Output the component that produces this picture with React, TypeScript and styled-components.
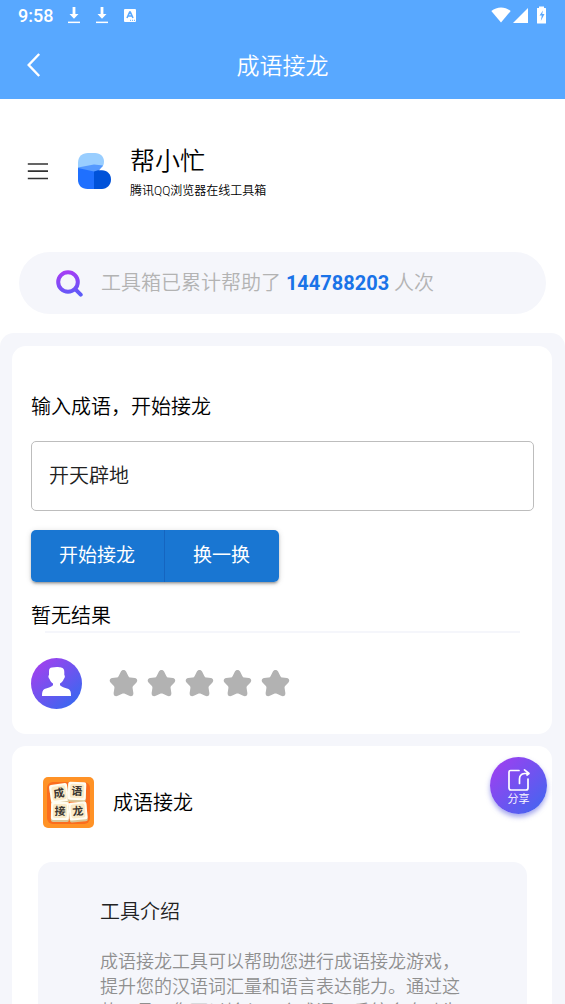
import React from "react";
import styled, { createGlobalStyle } from "styled-components";

const GlobalStyle = createGlobalStyle`
  * { box-sizing: border-box; }
  body { margin: 0; background: #fff; }
  body, button, input {
    font-family: Roboto, "Noto Sans CJK SC", sans-serif;
  }
  h1, h2, h3, p { margin: 0; font-weight: 350; }
`;

const Screen = styled.div`
  position: relative;
  display: flex;
  flex-direction: column;
  height: 100vh;
  overflow: hidden;
  color: #000;
`;

const TopBar = styled.header`
  flex: none;
  background: #58a8ff;
  color: #fff;
`;

const StatusBar = styled.div`
  display: flex;
  align-items: center;
  justify-content: space-between;
  height: 32px;
  padding: 0 18px;
`;

const StatusGroup = styled.div<{ $gap: number }>`
  display: flex;
  align-items: center;
  gap: ${(p) => p.$gap}px;
`;

const Clock = styled.time`
  font-size: 18px;
  font-weight: 500;
  line-height: 32px;
`;

const TitleBar = styled.div`
  display: grid;
  grid-template-columns: 68px 1fr 68px;
  align-items: center;
  height: 67px;
`;

const IconButton = styled.button`
  display: flex;
  align-items: center;
  justify-content: center;
  padding: 0;
  border: 0;
  background: none;
  color: inherit;
  cursor: pointer;
`;

const Title = styled.h1`
  padding-top: 2px;
  font-size: 23px;
  line-height: 32px;
  text-align: center;
`;

const Scroller = styled.main`
  flex: 1;
  min-height: 0;
  overflow-y: auto;
  scrollbar-width: none;
`;

const Brand = styled.section`
  display: flex;
  align-items: center;
  height: 144px;
  padding-left: 27px;
`;

const Logo = styled.svg`
  margin: 0 19px 0 29px;
`;

const BrandText = styled.div`
  padding-top: 6px;
`;

const BrandName = styled.h2`
  font-size: 25px;
  line-height: 34px;
`;

const BrandNote = styled.p`
  font-size: 12px;
  line-height: 24px;
`;

const Counter = styled.section`
  display: flex;
  align-items: center;
  gap: 15px;
  height: 62px;
  margin: 9px 19px 19px;
  padding-left: 36px;
  border-radius: 31px;
  background: #f5f6fb;
  color: #b3b3b3;
  font-size: 20px;
  line-height: 30px;
`;

const Count = styled.strong`
  color: #1a73e8;
  font-weight: 700;
`;

const Panel = styled.div`
  display: flex;
  flex-direction: column;
  gap: 12px;
  padding: 13px 13px 13px 12px;
  border-radius: 14px 14px 0 0;
  background: #f5f6fb;
`;

const Card = styled.section`
  padding: 0 18px 25px 19px;
  border-radius: 14px;
  background: #fff;
`;

const FieldLabel = styled.label`
  display: block;
  padding-top: 46px;
  font-size: 20px;
  font-weight: 350;
  line-height: 30px;
`;

const Field = styled.input`
  display: block;
  width: 100%;
  height: 70px;
  margin: 19px 0;
  padding: 0 17px 3px;
  border: 1px solid #bdbdbd;
  border-radius: 5px;
  background: #fff;
  color: #212121;
  font-size: 20px;
  font-weight: 350;
  outline: 0;
`;

const ButtonGroup = styled.div`
  display: inline-flex;
  vertical-align: top;
  border-radius: 5px;
  box-shadow: 0 3px 2px -2px rgba(0, 0, 0, 0.2), 0 2px 3px rgba(0, 0, 0, 0.2),
    0 1px 6px rgba(0, 0, 0, 0.12);
`;

const Action = styled.button`
  height: 52px;
  padding: 0 29px 0 28px;
  border: 0;
  background: #1976d2;
  color: #fff;
  font-size: 19px;
  line-height: 28px;
  cursor: pointer;
  &:first-child {
    border-right: 1px solid #1565c0;
    border-radius: 5px 0 0 5px;
  }
  &:last-child {
    border-radius: 0 5px 5px 0;
  }
`;

const Result = styled.p`
  margin-top: 19px;
  padding-top: 1px;
  font-size: 20px;
  line-height: 29px;
`;

const Divider = styled.hr`
  height: 2px;
  margin: 0 14px 25px;
  border: 0;
  background: #f5f6fb;
`;

const RatingRow = styled.div`
  display: flex;
  align-items: center;
  gap: 27px;
`;

const Stars = styled.div`
  display: flex;
  gap: 9px;
`;

const ToolHead = styled.div`
  display: flex;
  align-items: center;
  gap: 19px;
  padding: 31px 12px 34px;
`;

const ToolName = styled.h2`
  font-size: 20px;
  line-height: 30px;
`;

const Intro = styled.article`
  margin: 0 7px;
  padding: 35px 62px;
  border-radius: 14px;
  background: #f5f6fb;
`;

const IntroTitle = styled.h3`
  margin-bottom: 22px;
  color: #222;
  font-size: 20px;
  line-height: 30px;
`;

const IntroText = styled.p`
  color: #8f8f8f;
  font-size: 18px;
  line-height: 25px;
`;

const Share = styled.button`
  position: absolute;
  top: 757px;
  right: 18px;
  display: flex;
  flex-direction: column;
  align-items: center;
  gap: 1px;
  width: 57px;
  height: 57px;
  padding: 10px 0 0;
  border: 0;
  border-radius: 50%;
  background: linear-gradient(135deg, #a63cf0, #3c69f0);
  box-shadow: 0 3px 5px rgba(76, 80, 220, 0.5);
  color: #fff;
  font-size: 11px;
  font-weight: 350;
  line-height: 14px;
  cursor: pointer;
`;

const Download = () => (
  <svg width="14" height="18" viewBox="0 0 14 18" fill="#fff" aria-hidden="true">
    <path d="M5.6 0h2.8v7h3.1L7 11.7 2.5 7h3.1z" />
    <path d="M1 14.6h12v1.5H1z" />
  </svg>
);

const Star = () => (
  <svg width="29" height="29" viewBox="0 0 30 30" fill="#b2b2b2" aria-hidden="true">
    <path d="M12.2 2.9C13.3.5 16.7.5 17.8 2.9l2.3 4.5c.5 1 1.1 1.3 2.1 1.4l4.6.6c2.6.4 3.2 3.2 1.4 4.9l-3 3.1c-.7.7-.9 1.2-.8 2.2l.8 5.2c.4 2.6-2 4.3-4.3 3l-4.5-2.1c-1-.5-1.8-.5-2.8 0l-4.5 2.1c-2.3 1.3-4.7-.4-4.3-3l.8-5.2c.1-1-.1-1.5-.8-2.2l-3-3.1C0 12.6.6 9.8 3.2 9.4l4.6-.6c1-.1 1.6-.4 2.1-1.4z" />
  </svg>
);

const TILES = [
  { char: "成", x: 16, y: 16, turn: -8 },
  { char: "语", x: 34, y: 14, turn: 2 },
  { char: "接", x: 17, y: 34, turn: 1 },
  { char: "龙", x: 35, y: 34, turn: -5 },
];

export default function App() {
  return (
    <Screen>
      <GlobalStyle />
      <TopBar>
        <StatusBar>
          <StatusGroup $gap={14}>
            <Clock>9:58</Clock>
            <Download />
            <Download />
            <svg width="14" height="16" viewBox="0 0 14 16" aria-hidden="true">
              <rect x="1" y="1" width="12" height="13" rx="1" fill="#fff" />
              <path d="M4 10 6.7 4h.6L10 10M5.2 8h3.6" fill="none" stroke="#58a8ff" strokeWidth="1.6" />
              <path d="M7 12.3h5" stroke="#58a8ff" strokeDasharray="1 1" />
            </svg>
          </StatusGroup>
          <StatusGroup $gap={2}>
            <svg width="20" height="18" viewBox="0 0 20 18" fill="#fff" aria-hidden="true">
              <path d="M.3 4C6-.8 14-.8 19.7 4L10 15.5z" />
            </svg>
            <svg width="15" height="17" viewBox="0 0 15 17" fill="#fff" aria-hidden="true">
              <path d="M15 0v15H0z" />
            </svg>
            <svg width="17" height="20" viewBox="0 0 17 20" aria-hidden="true">
              <path d="M7 2h2V.5h5V2h1.500q.5 0 .5.5v14.500q0 .5-.5.5H7.500q-.5 0-.5-.5z" fill="#fff" />
              <path d="M13 4.500 9.500 9.500h2.300l-1 5.500 3.700-7h-2.300z" fill="#58a8ff" />
            </svg>
          </StatusGroup>
        </StatusBar>
        <TitleBar>
          <IconButton aria-label="返回">
            <svg width="16" height="26" viewBox="0 0 16 26" fill="none" stroke="#fff" strokeWidth="2.4" aria-hidden="true">
              <path d="M13.2 1 2.7 12l10.500 11" />
            </svg>
          </IconButton>
          <Title>成语接龙</Title>
        </TitleBar>
      </TopBar>

      <Scroller>
        <Brand>
          <IconButton aria-label="菜单">
            <svg width="22" height="18" viewBox="0 0 22 18" stroke="#333" strokeWidth="1.7" aria-hidden="true">
              <path d="M.8 2h20.200M.8 9.200h20.200M.8 16.500h20.200" />
            </svg>
          </IconButton>
          <Logo width="33" height="36" viewBox="0 0 33 36" aria-hidden="true">
            <path d="M0 15V10C0 3.500 4 0 10 0h7c5.500 0 9 4 9 8.500 0 2.500-.7 4-1.700 5.500L16 18z" fill="#99ceff" />
            <path d="M0 14.500 16 11.500 25 12.500 21 17.500 16 22 0 16z" fill="#5499ff" />
            <path d="M0 15l16 3.500V36H9.500C3.500 36 0 32 0 27z" fill="#1f70ff" />
            <path d="M16 18.500 20 17.300h4c5.300 0 9 4 9 9.200S29 36 24 36h-8z" fill="#0052d9" />
          </Logo>
          <BrandText>
            <BrandName>帮小忙</BrandName>
            <BrandNote>腾讯QQ浏览器在线工具箱</BrandNote>
          </BrandText>
        </Brand>

        <Counter>
          <svg width="31" height="28" viewBox="0 0 31 28" fill="none" strokeWidth="4" strokeLinecap="round" aria-hidden="true">
            <defs>
              <linearGradient id="lens" gradientUnits="userSpaceOnUse" x1="12" y1="2" x2="16" y2="28">
                <stop offset="0" stopColor="#a63cf5" />
                <stop offset="1" stopColor="#5a5cf8" />
              </linearGradient>
            </defs>
            <circle cx="13" cy="13" r="9.8" stroke="url(#lens)" />
            <path d="m20.2 20.2 5.500 5.500" stroke="url(#lens)" />
          </svg>
          <p>
            工具箱已累计帮助了 <Count>144788203</Count> 人次
          </p>
        </Counter>

        <Panel>
          <Card>
            <FieldLabel htmlFor="idiom">输入成语，开始接龙</FieldLabel>
            <Field id="idiom" type="text" defaultValue="开天辟地" />
            <ButtonGroup>
              <Action>开始接龙</Action>
              <Action>换一换</Action>
            </ButtonGroup>
            <Result>暂无结果</Result>
            <Divider />
            <RatingRow>
              <svg width="51" height="51" viewBox="0 0 51 51" aria-hidden="true">
                <defs>
                  <linearGradient id="avatar" x1="0.15" y1="0.1" x2="0.85" y2="0.9">
                    <stop offset="0" stopColor="#9e42ee" />
                    <stop offset="1" stopColor="#3b67f0" />
                  </linearGradient>
                </defs>
                <circle cx="25.5" cy="25.5" r="25.5" fill="url(#avatar)" />
                <path
                  d="M18 13c0-2.500 1-3.200 3-3.500 3-.8 7-.8 9 0 2.500.5 3.300 2 3.300 4.500v3c1 1 .7 2.600-.5 4-.8 2-2.300 3.500-3.800 4.500v1.800c2 2.200 5.500 2.400 8.500 3.700 2 1 2.500 3 2.500 7h-29c0-4 .5-6 2.500-7 3-1.300 6.500-1.500 8.500-3.700v-1.800c-1.500-1-2.700-2.500-3.500-4.500-1.200-1.400-1.500-3-.5-4z"
                  fill="#fff"
                />
              </svg>
              <Stars role="group" aria-label="评分">
                {[1, 2, 3, 4, 5].map((n) => (
                  <IconButton key={n} aria-label={`${n} 星`}>
                    <Star />
                  </IconButton>
                ))}
              </Stars>
            </RatingRow>
          </Card>

          <Card>
            <ToolHead>
              <svg width="51" height="51" viewBox="0 0 51 51" aria-hidden="true">
                <rect width="51" height="51" rx="5" fill="#ff9226" />
                <rect x="4" y="5" width="43" height="42" rx="6" fill="#fb6d1e" />
                {TILES.map((t) => (
                  <g key={t.char} transform={`rotate(${t.turn} ${t.x} ${t.y})`}>
                    <rect x={t.x - 9} y={t.y - 8} width="18" height="19" rx="2" fill="#d9c596" />
                    <rect x={t.x - 9} y={t.y - 9} width="18" height="18" rx="2" fill="#fffdf2" />
                    <rect x={t.x - 7} y={t.y - 7} width="14" height="14" rx="2" fill="#fbebc8" />
                    <text x={t.x} y={t.y + 4} fontSize="11" fontWeight="700" fill="#3a3631" textAnchor="middle">
                      {t.char}
                    </text>
                  </g>
                ))}
              </svg>
              <ToolName>成语接龙</ToolName>
            </ToolHead>
            <Intro>
              <IntroTitle>工具介绍</IntroTitle>
              <IntroText>
                成语接龙工具可以帮助您进行成语接龙游戏，提升您的汉语词汇量和语言表达能力。通过这款工具，您可以输入一个成语，系统会自动为您接龙。
              </IntroText>
            </Intro>
          </Card>
        </Panel>
      </Scroller>

      <Share>
        <svg width="24" height="25" viewBox="0 0 24 25" fill="none" stroke="#fff" strokeWidth="1.7" strokeLinejoin="round" strokeLinecap="round" aria-hidden="true">
          <path d="M12 3.500H3.500Q2 3.500 2 5v16q0 2 2 2h15q2 0 2-2v-9" />
          <path d="M12.500 16.500V12q0-5 5-5.500h4M17.500 2.800 22 6.500l-2 1.500" />
        </svg>
        分享
      </Share>
    </Screen>
  );
}
